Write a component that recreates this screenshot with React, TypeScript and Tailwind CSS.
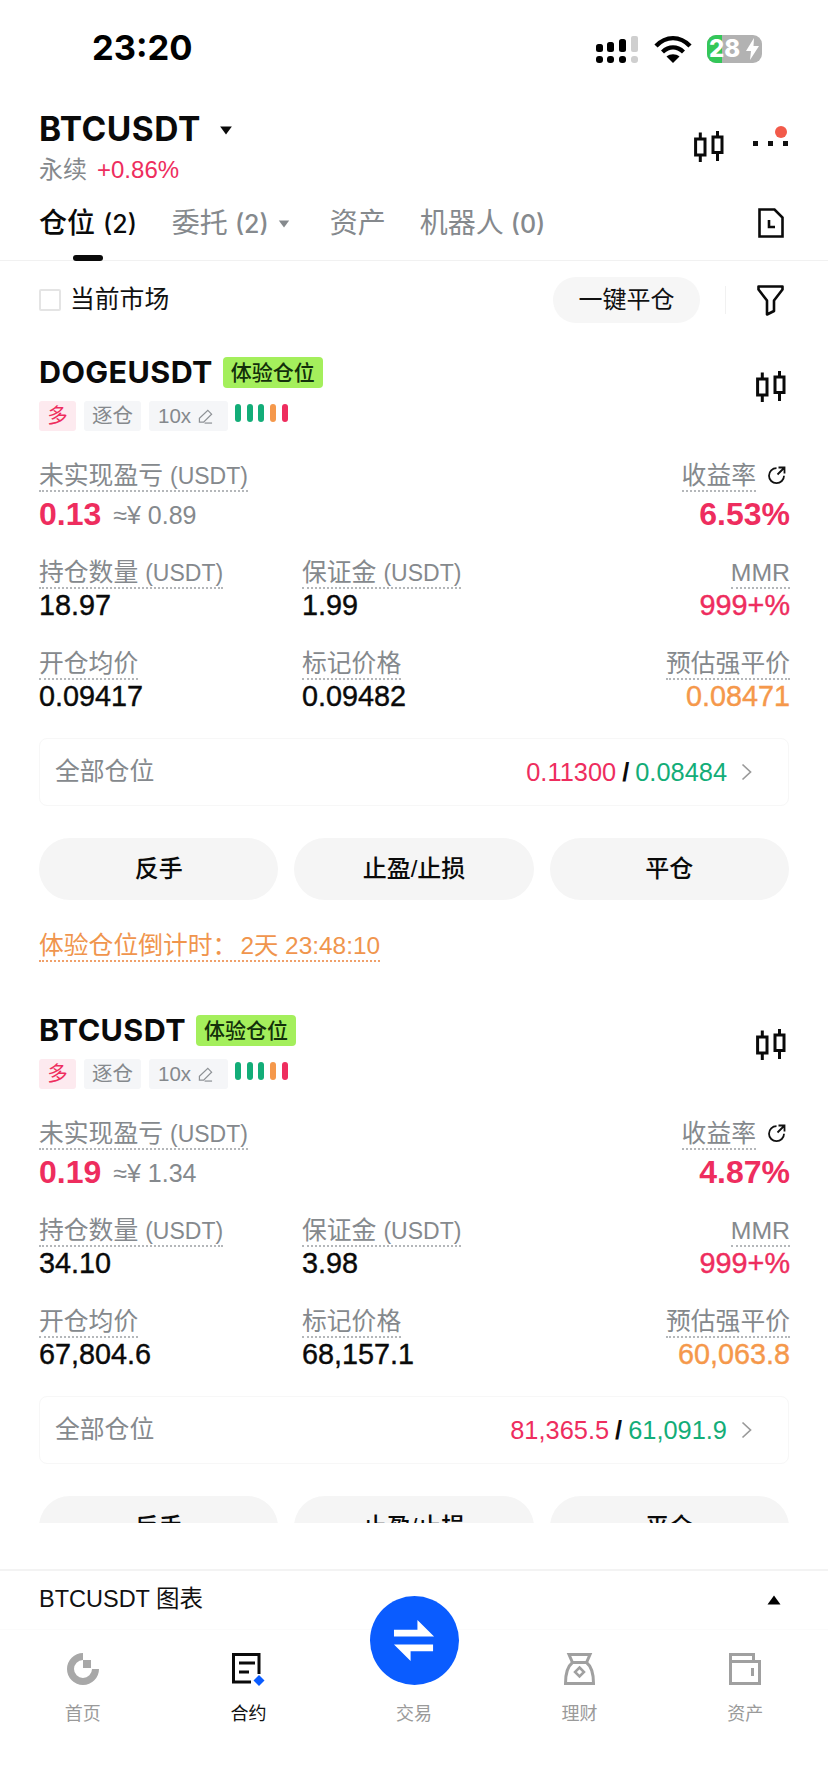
import React from 'react';

const CandleIcon = () => (
  <svg width="30" height="32" viewBox="0 0 30 32" fill="none" stroke="#0a0a0a" strokeWidth="3">
    <rect x="1.600" y="8" width="9.400" height="16" />
    <path d="M6.300 1.500V8M6.300 24v7" />
    <rect x="19" y="6" width="9" height="15.500" />
    <path d="M23.500 0v6M23.500 21.500V30" />
  </svg>
);

const Triangle = ({ up, size = 'w-[13px] h-[9px]', color = '#0a0a0a' }: { up?: boolean; size?: string; color?: string }) => (
  <svg className={size} viewBox="0 0 14 10" fill={color}>
    <path d={up ? 'M7 0.500 13.500 9.500H.5Z' : 'M.5.5H13.500L7 9.500Z'} />
  </svg>
);

function Label({ text, unit, orange }: { text: string; unit?: string; orange?: boolean }) {
  return (
    <span
      className={`inline-block h-[30px] border-b-[2px] border-dotted text-[24.8px] leading-[28px] whitespace-nowrap ${
        orange ? 'border-[#f0a06a] text-[#f0954d]' : 'border-[#b4b7ba] text-[#85898d]'
      }`}
    >
      {text}
      {unit && <span className={orange ? 'ml-[3px] text-[24.4px]' : 'ml-[7px] text-[23px]'}>{unit}</span>}
    </span>
  );
}

const Value = ({ children, className = 'text-[#0a0a0a]' }: { children: React.ReactNode; className?: string }) => (
  <div className={`-mt-px h-[34px] text-[28.800px] leading-[34px] [-webkit-text-stroke:0.4px] ${className}`}>
    {children}
  </div>
);

type Position = {
  symbol: string;
  pnl: string;
  cny: string;
  roi: string;
  qty: string;
  margin: string;
  entry: string;
  mark: string;
  liq: string;
  tp: string;
  sl: string;
  countdown?: string;
};

const positions: Position[] = [
  {
    symbol: 'DOGEUSDT',
    pnl: '0.13',
    cny: '≈¥ 0.89',
    roi: '6.53%',
    qty: '18.97',
    margin: '1.99',
    entry: '0.09417',
    mark: '0.09482',
    liq: '0.08471',
    tp: '0.11300',
    sl: '0.08484',
    countdown: '2天 23:48:10',
  },
  {
    symbol: 'BTCUSDT',
    pnl: '0.19',
    cny: '≈¥ 1.34',
    roi: '4.87%',
    qty: '34.10',
    margin: '3.98',
    entry: '67,804.6',
    mark: '68,157.1',
    liq: '60,063.8',
    tp: '81,365.5',
    sl: '61,091.9',
  },
];

function PositionCard({ p }: { p: Position }) {
  return (
    <section className="h-[658px] px-[39px] pt-[33px]">
      <div className="flex items-center justify-between">
        <div>
          <div className="flex h-[31px] items-center">
            <h2 className="font-['Inter',sans-serif] text-[30.500px] font-bold leading-none tracking-[0.4px] text-[#0a0a0a]">{p.symbol}</h2>
            <span className="ml-[10px] flex h-[31px] w-[100px] items-center justify-center rounded-[4px] bg-[#a4ef5c] text-[21px] font-medium leading-none text-[#12300a]">
              体验仓位
            </span>
          </div>
          <div className="mt-[13px] flex h-[30px] items-start">
            <span className="flex h-[30px] w-[37px] items-center justify-center rounded-[3px] bg-[#fdeaef] text-[20.500px] text-[#ee2d5e]">
              多
            </span>
            <span className="ml-[8px] flex h-[30px] w-[57px] items-center justify-center rounded-[3px] bg-[#f5f6f8] text-[20.500px] text-[#85898d]">
              逐仓
            </span>
            <span className="ml-[8px] flex h-[30px] w-[79px] items-center gap-[7px] rounded-[3px] bg-[#f5f6f8] pl-[9px] text-[20.500px] text-[#85898d]">
              10x
              <svg width="15" height="15" viewBox="0 0 16 16" fill="none" stroke="#8d9195" strokeWidth="1.300">
                <path d="M10.500 1.500 14.500 5.500 6 14H1.500V10Z" />
                <path d="M7 15H15" />
              </svg>
            </span>
            <div className="ml-[7px] mt-[3px] flex gap-[5.700px]">
              {['#13ad78', '#13ad78', '#13ad78', '#f5984b', '#ee2d5e'].map((c, i) => (
                <svg key={i} width="6" height="18" viewBox="0 0 6 18">
                  <rect width="6" height="18" rx="3" fill={c} />
                </svg>
              ))}
            </div>
          </div>
        </div>
        <div className="mb-[14px] mr-[3px]">
          <CandleIcon />
        </div>
      </div>

      <div className="-mr-px mt-[31px] flex items-start justify-between">
        <div>
          <Label text="未实现盈亏" unit="(USDT)" />
          <div className="mt-[2px] flex h-[40px] items-center">
            <span className="text-[32px] font-bold text-[#ee2d5e]">{p.pnl}</span>
            <span className="ml-[12px] mt-[3px] text-[25px] text-[#85898d]">{p.cny}</span>
          </div>
        </div>
        <div className="flex flex-col items-end">
          <div className="flex items-start">
            <Label text="收益率" />
            <svg className="ml-[11px] mr-[4px] mt-[4px]" width="19" height="19" viewBox="0 0 19 19" fill="none" stroke="#111" strokeWidth="1.800">
              <path d="M9.500 2.200a7.500 7.500 0 1 0 7.500 7.500" />
              <path d="M11.500 1.500h6v6M17.500 1.500l-7 7" />
            </svg>
          </div>
          <div className="mt-[2px] flex h-[40px] items-center text-[32px] font-bold text-[#ee2d5e]">{p.roi}</div>
        </div>
      </div>

      <div className="-mr-px mt-[25px] grid grid-cols-[263px_1fr_auto]">
        <div>
          <Label text="持仓数量" unit="(USDT)" />
          <Value>{p.qty}</Value>
        </div>
        <div>
          <Label text="保证金" unit="(USDT)" />
          <Value>{p.margin}</Value>
        </div>
        <div className="flex flex-col items-end">
          <Label text="MMR" />
          <Value className="text-[#ee2d5e]">999+%</Value>
        </div>
      </div>

      <div className="-mr-px mt-[28px] grid grid-cols-[263px_1fr_auto]">
        <div>
          <Label text="开仓均价" />
          <Value>{p.entry}</Value>
        </div>
        <div>
          <Label text="标记价格" />
          <Value>{p.mark}</Value>
        </div>
        <div className="flex flex-col items-end">
          <Label text="预估强平价" />
          <Value className="text-[#f5984b]">{p.liq}</Value>
        </div>
      </div>

      <div className="mt-[25px] flex h-[68px] items-center justify-between rounded-[8px] border border-[#f7f7f7] pl-[15px] pr-[36px]">
        <span className="text-[24.800px] text-[#85898d]">全部仓位</span>
        <div className="flex items-center text-[25.400px]">
          <span className="text-[#ee2d5e]">{p.tp}</span>
          <span className="mx-[6px] font-bold text-[#0a0a0a]">/</span>
          <span className="text-[#13ad78]">{p.sl}</span>
          <svg className="ml-[14px]" width="11" height="18" viewBox="0 0 11 18" fill="none" stroke="#9a9a9a" strokeWidth="1.700">
            <path d="M1.500 1.500 9.500 9 1.500 16.500" />
          </svg>
        </div>
      </div>

      <div className="mt-[32px] grid grid-cols-3 gap-[16px]">
        {['反手', '止盈/止损', '平仓'].map((t) => (
          <button key={t} type="button" className="h-[62px] rounded-full bg-[#f5f5f5] text-[24px] font-medium text-[#0a0a0a]">
            {t}
          </button>
        ))}
      </div>

      {p.countdown && (
        <div className="mt-[32px]">
          <Label text="体验仓位倒计时：" unit={p.countdown} orange />
        </div>
      )}
    </section>
  );
}

function NavItem({ label, active, children }: { label: string; active?: boolean; children?: React.ReactNode }) {
  return (
    <div className="flex flex-col items-center">
      <div className="flex h-[32px] items-center justify-center">{children}</div>
      <span className={`mt-[16px] text-[18px] leading-[26px] ${active ? 'text-[#111]' : 'text-[#9a9a9a]'}`}>{label}</span>
    </div>
  );
}

export default function App() {
  return (
    <div className="flex h-[1792px] w-[828px] flex-col overflow-hidden bg-white font-['Liberation_Sans','Noto_Sans_CJK_SC',sans-serif]">
      <div className="flex h-[98px] shrink-0 items-center justify-between pb-[1px] pl-[92px] pr-[66px]">
        <span className="font-['Inter',sans-serif] text-[34.500px] font-bold leading-none text-black">23:20</span>
        <div className="flex items-center">
          <svg width="44" height="30" viewBox="0 0 44 30" fill="#000">
            <rect x="1" y="10" width="7" height="8" rx="2.500" />
            <rect x="12" y="8" width="7" height="10" rx="2.500" />
            <rect x="24" y="5" width="7" height="13" rx="2.500" />
            <rect x="36" y="2" width="7" height="16" rx="2" fill="#cfcfcf" />
            <rect x="1" y="22" width="7" height="7" rx="3" />
            <rect x="12" y="22" width="7" height="7" rx="3" />
            <rect x="24" y="22" width="7" height="7" rx="3" />
            <rect x="36" y="22" width="7" height="7" rx="3" fill="#cfcfcf" />
          </svg>
          <svg className="ml-[15px]" width="38" height="28" viewBox="0 0 38 28" fill="none" stroke="#000" strokeWidth="4.400">
            <path d="M2 11c10-10.500 24-10.500 34 0" />
            <path d="M8.500 17c6.500-6 14.500-6 21 0" />
            <path d="M19 28 12.500 21.500c3.800-3 9.200-3 13 0Z" fill="#000" stroke="none" />
          </svg>
          <div className="relative ml-[15px] flex h-[28px] w-[55px] items-center rounded-[9px] bg-[#b2b2b2]">
            <div className="h-full w-[15px] rounded-l-[9px] bg-[#34c759]" />
            <span className="absolute left-[2px] top-[1px] font-['Inter',sans-serif] text-[24px] font-extrabold leading-[26px] text-white">28</span>
            <svg className="absolute right-[3px] top-[3px]" width="13" height="22" viewBox="0 0 13 22" fill="#fff">
              <path d="M8 0 0 13h5l-1 9 9-14H7.500Z" />
            </svg>
          </div>
        </div>
      </div>

      <header className="flex h-[88px] shrink-0 items-start justify-between pl-[39px] pr-[40px] pt-[16px]">
        <div>
          <div className="flex h-[32px] items-center">
            <h1 className="font-['Inter',sans-serif] text-[33.500px] font-bold leading-none tracking-[0.5px] text-[#0a0a0a]">BTCUSDT</h1>
            <Triangle size="ml-[18px] h-[9px] w-[14px]" />
          </div>
          <div className="mt-[9px] flex h-[30px] items-center text-[24px]">
            <span className="text-[#85898d]">永续</span>
            <span className="ml-[10px] text-[#ee2d5e]">+0.86%</span>
          </div>
        </div>
        <div className="flex items-start pt-[17px]">
          <CandleIcon />
          <div className="relative ml-[29px] mt-[10px] flex w-[35px] justify-between">
            <i className="h-[5px] w-[5px] bg-[#111]" />
            <i className="h-[5px] w-[5px] bg-[#111]" />
            <i className="h-[5px] w-[5px] bg-[#111]" />
            <i className="absolute right-[1px] top-[-15px] h-[12px] w-[12px] rounded-full bg-[#f25a4a]" />
          </div>
        </div>
      </header>

      <nav className="relative flex h-[75px] shrink-0 items-start border-b border-[#f1f1f1] pl-[39px] pr-[44px] pt-[18px] text-[28px] leading-[40px] text-[#85898d]">
        <span className="relative font-medium text-[#0a0a0a]">
          仓位<span className="ml-[8px] font-['Inter',sans-serif] text-[25px]">(2)</span>
          <i className="absolute left-[34px] top-[51px] h-[6px] w-[30px] rounded-full bg-[#0a0a0a]" />
        </span>
        <span className="ml-[35px] flex items-center">
          委托<span className="ml-[7px] font-['Inter',sans-serif] text-[25px] font-medium">(2)</span>
          <Triangle size="ml-[9px] h-[8px] w-[12px]" color="#85898d" />
        </span>
        <span className="ml-[40px]">资产</span>
        <span className="ml-[34px]">
          机器人<span className="ml-[7px] font-['Inter',sans-serif] text-[25px] font-medium">(0)</span>
        </span>
        <svg className="ml-auto mt-[4px]" width="26" height="30" viewBox="0 0 26 30" fill="none" stroke="#0a0a0a" strokeWidth="2.600">
          <path d="M1.500 1.500H16.500L24.500 9.500V28.500H1.500Z" />
          <path d="M11 12V19H17" />
        </svg>
      </nav>

      <div className="min-h-0 flex-1 overflow-hidden">
        <div className="flex h-[63px] items-center pb-[1px] pl-[39px] pr-[44px] pt-[16px]">
          <span className="h-[22px] w-[22px] rounded-[2px] border-2 border-[#e4e4e4]" />
          <span className="ml-[9px] text-[24.800px] text-[#111]">当前市场</span>
          <button type="button" className="ml-auto mr-px h-[46px] w-[147px] rounded-full bg-[#f6f6f6] text-[24px] text-[#111]">
            一键平仓
          </button>
          <i className="ml-[24px] h-[28px] w-px bg-[#f1f1f1]" />
          <svg className="ml-[31px]" width="27" height="31" viewBox="0 0 27 31" fill="none" stroke="#0a0a0a" strokeWidth="2.600">
            <path d="M1.500 1.500H25.500V4.500L17 15.500V26L10 29.500V15.500L1.500 4.500Z" strokeLinejoin="round" />
          </svg>
        </div>
        {positions.map((p) => (
          <PositionCard key={p.symbol} p={p} />
        ))}
      </div>

      <div className="relative h-[269px] shrink-0 pt-[46px]">
        <div className="flex h-[61px] items-center justify-between border-b border-[#fbfbfb] border-t-2 border-t-[#f3f3f3] pl-[39px] pr-[47px]">
          <span className="text-[23.500px] text-[#111]">BTCUSDT 图表</span>
          <Triangle up size="h-[10px] w-[14px]" color="#000" />
        </div>
        <div className="grid grid-cols-5 pt-[23px]">
          <NavItem label="首页">
            <svg width="32" height="32" viewBox="0 0 32 32" fill="none">
              <path d="M16 3.500A12.500 12.500 0 1 0 28.500 16" stroke="#a8a8a8" strokeWidth="7" />
              <rect x="16" y="7" width="8" height="8" fill="#a8a8a8" />
            </svg>
          </NavItem>
          <NavItem label="合约" active>
            <svg width="34" height="34" viewBox="0 0 34 34" fill="none">
              <path d="M28 22V2.500H2.500V30H20" stroke="#0a0a0a" strokeWidth="3" />
              <path d="M8 11H24M8 20H18" stroke="#0a0a0a" strokeWidth="3" />
              <path d="M28 23 33.500 28.500 28 34 22.500 28.500Z" fill="#0a5cff" />
            </svg>
          </NavItem>
          <NavItem label="交易" />
          <NavItem label="理财">
            <svg width="31" height="32" viewBox="0 0 31 32" fill="none" stroke="#a0a0a0" strokeWidth="3">
              <path d="M5 1.500H26L22.500 9.500H8.500Z" />
              <path d="M8.500 9.500C4 13 1.500 20 1.500 30.500H29.500C29.500 20 27 13 22.500 9.500" />
              <path d="M15.500 14.500 20 19 15.500 23.500 11 19Z" strokeWidth="2.500" />
            </svg>
          </NavItem>
          <NavItem label="资产">
            <svg width="32" height="32" viewBox="0 0 32 32" fill="none" stroke="#a0a0a0" strokeWidth="3">
              <path d="M1.500 30.500V1.500H24.500V8.500" />
              <path d="M1.500 8.500H30.500V30.500H1.500Z" />
              <path d="M23.500 15V23" />
            </svg>
          </NavItem>
        </div>
        <div className="absolute left-[370px] top-[73px] flex h-[89px] w-[89px] items-center justify-center rounded-full bg-[#0a5cff]">
          <svg width="43" height="43" viewBox="0 0 44 44" fill="#fff">
            <path d="M25 1 42 18H1V11H25Z" />
            <path d="M18 43 1 26H41V33H18Z" />
          </svg>
        </div>
      </div>
    </div>
  );
}
